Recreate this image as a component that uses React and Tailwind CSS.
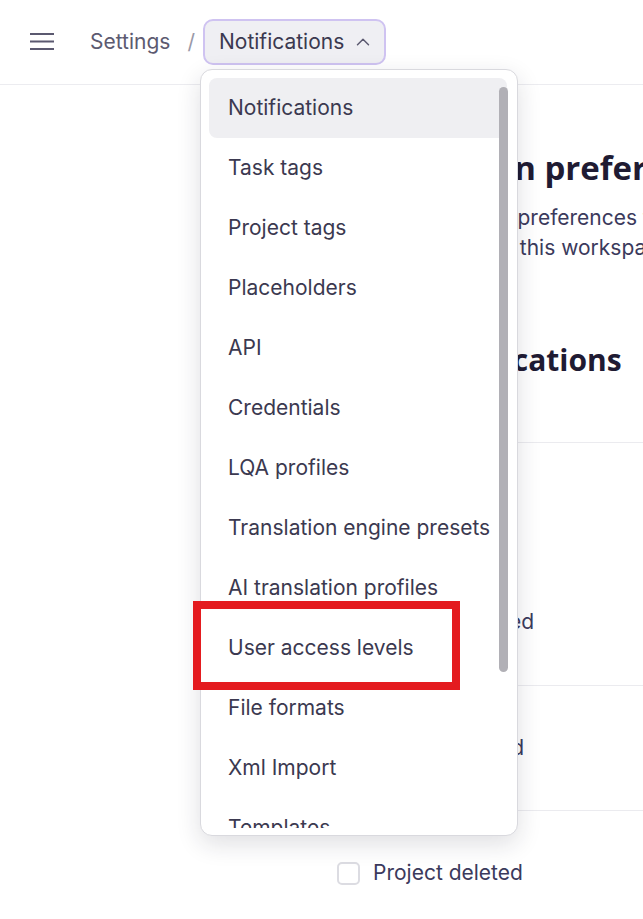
import { ChevronUp } from 'lucide-react';

const menuItems = [
    'Notifications',
    'Task tags',
    'Project tags',
    'Placeholders',
    'API',
    'Credentials',
    'LQA profiles',
    'Translation engine presets',
    'AI translation profiles',
    'User access levels',
    'File formats',
    'Xml Import',
    'Templates',
];

const Checkbox = ({ label }) => (
    <label className="flex items-center gap-[13px] text-[21px] text-[#3b3a5c]">
        <span className="w-[23px] h-[23px] rounded-[5px] border-2 border-[#dcdce2] bg-white" />
        {label}
    </label>
);

const App = () => {
    return (
        <div className="relative h-screen w-full overflow-hidden bg-white font-['Inter','Noto_Sans',sans-serif] text-[#3b3950]">
            {/* Top bar with breadcrumbs */}
            <header className="h-[85px] border-b border-[#ececf0] flex items-center pl-[30px]">
                <svg width="24" height="18" viewBox="0 0 24 18" className="text-[#5b5970]">
                    <path d="M0 1h24M0 8.5h24M0 16h24" stroke="currentColor" strokeWidth="2" />
                </svg>
                <span className="ml-[36px] text-[21px] text-[#5c5a70]">Settings</span>
                <span className="ml-[17px] text-[21px] text-[#9a99a8]">/</span>
                <button className="ml-[8px] h-[46px] w-[183px] flex items-center pl-[14px] gap-[8px] rounded-[10px] border-2 border-[#cfc3f1] bg-[#efeff3] text-[21px] text-[#3b3950]">
                    Notifications
                    <ChevronUp size={22} strokeWidth={1.6} className="text-[#5b5970]" />
                </button>
            </header>

            {/* Settings page content */}
            <main className="pl-[338px] text-[#1f1b33]">
                <h1 className="mt-[62px] font-['Open_Sans','Inter',sans-serif] text-[33px] leading-[42px] font-bold whitespace-nowrap">
                    Notification preferences
                </h1>
                <p className="mt-[14px] ml-[35px] text-[21px] leading-[30px] text-[#3b3a5c] whitespace-nowrap">
                    Manage email preferences that apply
                    <br />
                    to everyone in this workspace.
                </p>
                <h2 className="mt-[78px] ml-[3px] font-['Open_Sans','Inter',sans-serif] text-[30px] leading-[38px] font-bold whitespace-nowrap">
                    Email notifications
                </h2>
            </main>

            <section className="mt-[63px] ml-[313px]">
                <div className="h-[243px] border-t border-[#ebebef] pl-[24px] flex flex-col justify-end pb-[48px] gap-[26px]">
                    <span className="text-[21px] font-semibold text-[#1f1b33]">Projects</span>
                    <Checkbox label="Project archived" />
                </div>
                <div className="h-[125px] border-t border-[#ebebef] pl-[24px] flex items-center">
                    <Checkbox label="Project created" />
                </div>
                <div className="h-[125px] border-t border-[#ebebef] pl-[24px] flex items-center">
                    <Checkbox label="Project deleted" />
                </div>
            </section>

            {/* Breadcrumb dropdown */}
            <div className="absolute left-[200px] top-[69px] w-[318px] h-[767px] rounded-[12px] border border-[#d9d9de] bg-white shadow-[0_8px_24px_rgba(30,27,50,0.14)] pl-[8px] pr-[10px] pt-[8px] pb-[7px]">
                <ul className="h-full overflow-hidden">
                    {menuItems.map((item, i) => (
                        <li
                            key={item}
                            className={`h-[60px] shrink-0 flex items-center pl-[19px] rounded-[8px] text-[21px] text-[#3b3950] whitespace-nowrap ${i === 0 ? 'bg-[#efeff2]' : ''}`}
                        >
                            {item}
                        </li>
                    ))}
                </ul>
                <div className="absolute left-[298px] top-[17px] w-[9px] h-[585px] rounded-full bg-[#b1b0b6]" />
            </div>

            {/* Highlight frame */}
            <div className="absolute left-[193px] top-[601px] w-[267px] h-[89px] border-[8px] border-[#e41b1f]" />
        </div>
    );
};

export default App;
